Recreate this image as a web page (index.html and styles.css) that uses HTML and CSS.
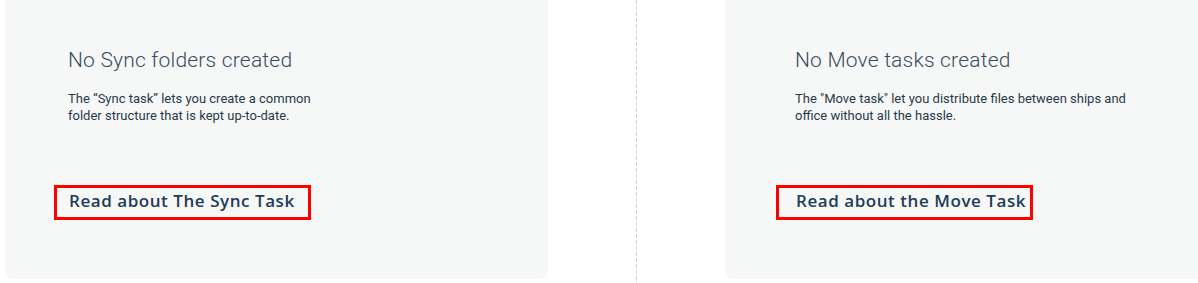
FILE: index.html
```html
<!DOCTYPE html>
<html lang="en">
<head>
<meta charset="utf-8">
<title>Tasks</title>
<link rel="stylesheet" href="styles.css">
</head>
<body>
<div class="board">
  <section class="card card-sync">
    <h2 class="card-title">No Sync folders created</h2>
    <p class="card-text">The “Sync task” lets you create a common<br>folder structure that is kept up-to-date.</p>
    <a class="card-link" href="#">Read about The Sync Task</a>
  </section>
  <div class="divider"></div>
  <section class="card card-move">
    <h2 class="card-title">No Move tasks created</h2>
    <p class="card-text">The "Move task" let you distribute files between ships and<br>office without all the hassle.</p>
    <a class="card-link" href="#">Read about the Move Task</a>
  </section>
</div>
</body>
</html>
```
FILE: styles.css
```css
html, body {
  margin: 0;
  padding: 0;
  background: #ffffff;
  overflow: hidden;
}

.board {
  display: flex;
  align-items: stretch;
  width: 1198px;
  height: 283px;
  box-sizing: border-box;
  padding-left: 5px;
}

.card {
  box-sizing: border-box;
  height: 279px;
  background: #f6f8f8;
  padding-top: 48px;
}

.card-sync {
  flex: none;
  width: 543px;
  padding-left: 63px;
  border-radius: 0 0 8px 8px;
}

.card-move {
  flex: 1;
  min-width: 0;
  padding-left: 70px;
  border-radius: 0 0 0 8px;
}

.divider {
  flex: none;
  width: 1px;
  margin: 0 88px;
  background: repeating-linear-gradient(to bottom, #c6d2dc 0 4px, transparent 4px 6px);
}

.card-title {
  margin: 0;
  font-family: Roboto, "Liberation Sans", sans-serif;
  font-weight: 300;
  font-size: 21px;
  letter-spacing: 0.2px;
  line-height: 24px;
  color: #3a4b5e;
}

.card-text {
  margin: 18px 0 0;
  font-family: Roboto, "Liberation Sans", sans-serif;
  font-weight: 400;
  font-size: 13px;
  line-height: 17px;
  color: #2a3949;
}

.card-link {
  display: block;
  box-sizing: border-box;
  width: 257px;
  margin-top: 61px;
  border: 3px solid #ff0000;
  padding: 0 0 3px;
  font-family: "Open Sans", sans-serif;
  font-weight: 600;
  font-size: 17px;
  letter-spacing: 0.55px;
  line-height: 26px;
  color: #1f3b57;
  text-decoration: none;
  white-space: nowrap;
}

.card-sync .card-link {
  margin-left: -14px;
  padding-left: 12px;
}

.card-move .card-link {
  margin-left: -19px;
  padding-left: 17px;
}
```
